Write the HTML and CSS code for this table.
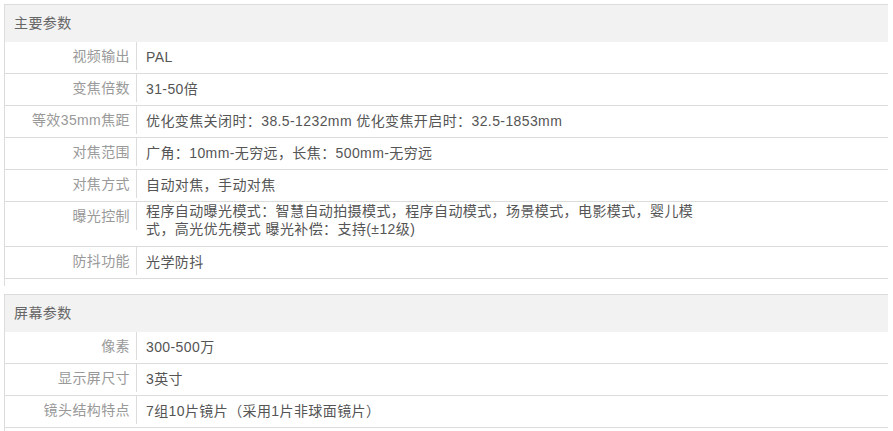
FILE: index.html
```html
<!DOCTYPE html>
<html lang="zh-CN">
<head>
<meta charset="utf-8">
<title>参数</title>
<link rel="stylesheet" href="styles.css">
</head>
<body>
<section class="group">
  <h3 class="group-title">主要参数</h3>
  <div class="row"><div class="label">视频输出</div><div class="val">PAL</div></div>
  <div class="row"><div class="label">变焦倍数</div><div class="val">31-50倍</div></div>
  <div class="row"><div class="label">等效35mm焦距</div><div class="val">优化变焦关闭时：38.5-1232mm 优化变焦开启时：32.5-1853mm</div></div>
  <div class="row"><div class="label">对焦范围</div><div class="val">广角：10mm-无穷远，长焦：500mm-无穷远</div></div>
  <div class="row"><div class="label">对焦方式</div><div class="val">自动对焦，手动对焦</div></div>
  <div class="row multi"><div class="label">曝光控制</div><div class="val">程序自动曝光模式：智慧自动拍摄模式，程序自动模式，场景模式，电影模式，婴儿模式，高光优先模式 曝光补偿：支持(±12级)</div></div>
  <div class="row"><div class="label">防抖功能</div><div class="val">光学防抖</div></div>
</section>
<section class="group">
  <h3 class="group-title">屏幕参数</h3>
  <div class="row"><div class="label">像素</div><div class="val">300-500万</div></div>
  <div class="row"><div class="label">显示屏尺寸</div><div class="val">3英寸</div></div>
  <div class="row"><div class="label">镜头结构特点</div><div class="val">7组10片镜片（采用1片非球面镜片）</div></div>
</section>
</body>
</html>
```
FILE: styles.css
```css
html, body {
  margin: 0;
  padding: 0;
  background: #fff;
}
body {
  font-family: "Liberation Sans", "Noto Sans CJK TC", "Noto Sans CJK SC", sans-serif;
  font-size: 14px;
  letter-spacing: 0.4px;
  color: #555;
}
.group {
  margin: 4px 5px 8px 4px;
  border-top: 1px solid #dcdcdc;
  border-left: 1px solid #dcdcdc;
  padding-bottom: 7px;
}
.group + .group {
  margin-top: 0;
}
.group-title {
  margin: 0;
  height: 37px;
  line-height: 37px;
  padding-left: 9px;
  background: #f2f2f2;
  font-size: 14px;
  font-weight: normal;
  color: #666;
}
.row {
  display: flex;
  align-items: flex-start;
  border-bottom: 1px solid #dcdcdc;
}
.label {
  flex: none;
  box-sizing: border-box;
  width: 132px;
  height: 28px;
  line-height: 28px;
  padding-right: 6px;
  text-align: right;
  color: #999;
  border-right: 1px solid #dcdcdc;
  white-space: nowrap;
}
.val {
  width: 554px;
  padding: 6px 0 7px 9px;
  line-height: 18px;
  color: #555;
}
.multi .val {
  padding: 0 0 8px 9px;
}
```
